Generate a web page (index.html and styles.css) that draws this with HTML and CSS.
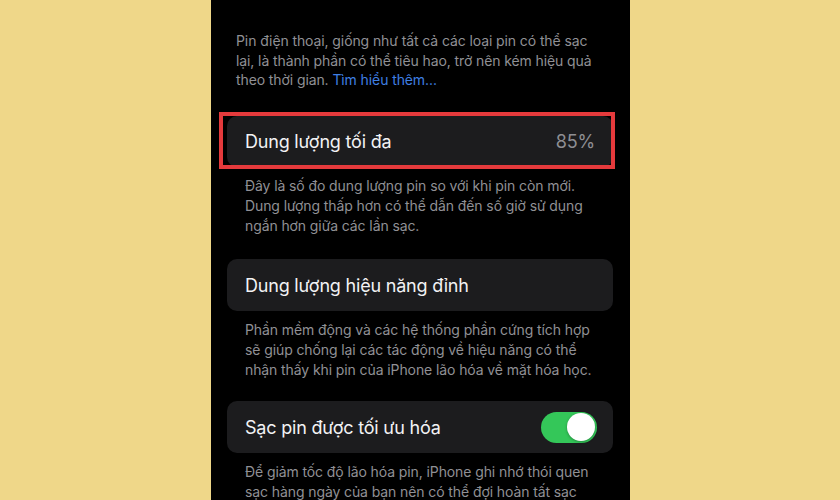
FILE: index.html
```html
<!DOCTYPE html>
<html lang="vi">
<head>
<meta charset="utf-8">
<title>Tình trạng pin</title>
<link rel="stylesheet" href="styles.css">
</head>
<body>
<div class="stage">
  <div class="phone">
    <p class="intro">Pin điện thoại, giống như tất cả các loại pin có thể sạc lại, là thành phần có thể tiêu hao, trở nên kém hiệu quả theo thời gian. <span class="link">Tìm hiểu thêm...</span></p>

    <div class="cell cell-first">
      <span class="label">Dung lượng tối đa</span>
      <span class="value">85%</span>
      <div class="highlight"></div>
    </div>
    <p class="desc desc-a">Đây là số đo dung lượng pin so với khi pin còn mới. Dung lượng thấp hơn có thể dẫn đến số giờ sử dụng ngắn hơn giữa các lần sạc.</p>

    <div class="cell cell-second">
      <span class="label">Dung lượng hiệu năng đỉnh</span>
    </div>
    <p class="desc desc-b">Phần mềm động và các hệ thống phần cứng tích hợp sẽ giúp chống lại các tác động về hiệu năng có thể nhận thấy khi pin của iPhone lão hóa về mặt hóa học.</p>

    <div class="cell cell-third">
      <span class="label">Sạc pin được tối ưu hóa</span>
      <span class="toggle"><span class="knob"></span></span>
    </div>
    <p class="desc desc-c">Để giảm tốc độ lão hóa pin, iPhone ghi nhớ thói quen sạc hàng ngày của bạn nên có thể đợi hoàn tất sạc</p>
  </div>
</div>
</body>
</html>
```

FILE: styles.css
```css
html, body {
  margin: 0;
  padding: 0;
}
body {
  background: #efd789;
  font-family: Inter, "Noto Sans", "Liberation Sans", sans-serif;
  overflow: hidden;
}
.stage {
  width: 840px;
  height: 500px;
  display: flex;
  justify-content: flex-start;
}
.phone {
  margin-left: 211px;
  width: 419px;
  height: 500px;
  background: #000;
  padding: 31px 17px 0 16px;
  box-sizing: border-box;
  overflow: hidden;
}
.intro {
  margin: 0;
  padding: 0 10px 0 9px;
  color: #909095;
  font-size: 14px;
  line-height: 19.7px;
  letter-spacing: -0.1px;
}
.link {
  color: #3f7fe3;
}
.cell {
  position: relative;
  height: 51px;
  background: #1c1c1e;
  border-radius: 10px;
  display: flex;
  align-items: center;
  justify-content: space-between;
  padding: 0 16px 0 18px;
  box-sizing: border-box;
}
.cell-first {
  margin-top: 26px;
  height: 51px;
}
.cell-second {
  margin-top: 24px;
  height: 52px;
}
.cell-third {
  margin-top: 22px;
  height: 52px;
}
.label {
  color: #f2f2f4;
  font-size: 18px;
  letter-spacing: -0.2px;
}
.value {
  color: #8e8e93;
  font-size: 18px;
  letter-spacing: -0.2px;
  padding-right: 2px;
}
.highlight {
  position: absolute;
  left: -8px;
  right: -2px;
  top: -4px;
  bottom: -2px;
  border: 4px solid #e53a3c;
  box-sizing: border-box;
  pointer-events: none;
}
.desc {
  margin: 9px 0 0 0;
  padding: 0 10px 0 18px;
  color: #909095;
  font-size: 14px;
  line-height: 19.7px;
  letter-spacing: -0.1px;
}
.toggle {
  width: 56px;
  height: 31px;
  border-radius: 16px;
  background: #34c759;
  display: flex;
  align-items: center;
  justify-content: flex-end;
  padding: 0 2px;
  box-sizing: border-box;
}
.knob {
  width: 28px;
  height: 28px;
  border-radius: 50%;
  background: #fff;
  box-shadow: 0 1px 3px rgba(0, 0, 0, 0.3);
}
```
